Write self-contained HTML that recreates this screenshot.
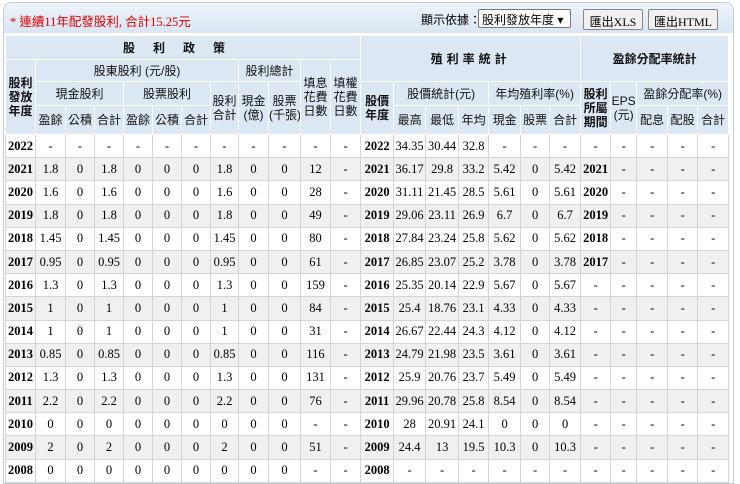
<!DOCTYPE html>
<html><head><meta charset="utf-8"><style>
body{margin:0;background:#fff;width:740px;height:466px;overflow:hidden;font-family:"Liberation Serif","Noto Sans CJK TC",serif;}
.box{position:absolute;left:3px;top:2px;width:729px;height:480px;border:1px solid #c4cdd6;border-radius:8px 8px 0 0;overflow:hidden;}
.top{position:absolute;left:0;top:0;width:729px;height:30px;background:linear-gradient(#eef4fa,#d9e6f2);}
.red{position:absolute;left:6px;top:8px;color:#e00000;font-size:12.5px;font-family:"Liberation Serif","Noto Sans CJK TC",serif;}
.lbl{position:absolute;left:417px;top:8px;font-size:12px;font-family:"Liberation Sans","Noto Sans CJK TC",sans-serif;}
.sel{position:absolute;left:474px;top:6px;width:93px;height:19px;border:1px solid #777;background:#fff;font-size:12px;font-family:"Liberation Sans","Noto Sans CJK TC",sans-serif;box-sizing:border-box;padding:1px 0 0 3px;border-radius:2px;white-space:nowrap;overflow:hidden}
.btn{position:absolute;top:6px;height:21px;border:1px solid #888;background:#f0f0f0;font-size:12px;box-sizing:border-box;padding:3px 0 0 0;text-align:center;border-radius:2px}
table{position:absolute;left:1px;top:32px;border-collapse:collapse;table-layout:fixed;width:724px;}
td,th{padding:0;text-align:center;font-size:12.5px;overflow:hidden;white-space:nowrap;}
th{background:#dbe8f4;border:1px solid #fff;font-weight:normal;font-family:"Liberation Sans","Noto Sans CJK TC",sans-serif;color:#111;line-height:14px;font-size:12px}
th.b{font-weight:bold}
td{border:1px solid #d4d4d4;height:22.2px;}
tr.g td{background:#f0f0f0}
td.y{font-weight:bold}
</style></head><body>
<div class="box">
<div class="top"></div>
<div class="red">* 連續11年配發股利, 合計15.25元</div>
<div class="lbl">顯示依據：</div>
<div class="sel">股利發放年度 ▾</div>
<div class="btn" style="left:579px;width:60px">匯出XLS</div>
<div class="btn" style="left:644px;width:70px">匯出HTML</div>
<table>
<colgroup>
<col style="width:30px"><col style="width:30px"><col style="width:29px"><col style="width:29px"><col style="width:29px"><col style="width:29px"><col style="width:29px"><col style="width:28px"><col style="width:30px"><col style="width:32px"><col style="width:30px"><col style="width:30px">
<col style="width:33px"><col style="width:32px"><col style="width:33px"><col style="width:30px"><col style="width:32px"><col style="width:29px"><col style="width:31px">
<col style="width:30px"><col style="width:26px"><col style="width:31px"><col style="width:30px"><col style="width:31px">
</colgroup>
<tr style="height:24px"><th class="b" colspan="12" style="letter-spacing:18px">股利政策</th><th class="b" colspan="7" rowspan="2" style="letter-spacing:4px">殖利率統計</th><th class="b" colspan="5" rowspan="2">盈餘分配率統計</th></tr>
<tr style="height:22px"><th class="b" rowspan="3">股利<br>發放<br>年度</th><th colspan="7">股東股利 (元/股)</th><th colspan="2">股利總計</th><th rowspan="3">填息<br>花費<br>日數</th><th rowspan="3">填權<br>花費<br>日數</th></tr>
<tr style="height:24px"><th colspan="3">現金股利</th><th colspan="3">股票股利</th><th rowspan="2">股利<br>合計</th><th rowspan="2">現金<br>(億)</th><th rowspan="2">股票<br>(千張)</th><th class="b" rowspan="2">股價<br>年度</th><th colspan="3">股價統計(元)</th><th colspan="3">年均殖利率(%)</th><th class="b" rowspan="2">股利<br>所屬<br>期間</th><th rowspan="2">EPS<br>(元)</th><th colspan="3">盈餘分配率(%)</th></tr>
<tr style="height:29px"><th>盈餘</th><th>公積</th><th>合計</th><th>盈餘</th><th>公積</th><th>合計</th><th>最高</th><th>最低</th><th>年均</th><th>現金</th><th>股票</th><th>合計</th><th>配息</th><th>配股</th><th>合計</th></tr>
<tr><td class="y">2022</td><td>-</td><td>-</td><td>-</td><td>-</td><td>-</td><td>-</td><td>-</td><td>-</td><td>-</td><td>-</td><td>-</td><td class="y">2022</td><td>34.35</td><td>30.44</td><td>32.8</td><td>-</td><td>-</td><td>-</td><td>-</td><td>-</td><td>-</td><td>-</td><td>-</td></tr>
<tr class="g"><td class="y">2021</td><td>1.8</td><td>0</td><td>1.8</td><td>0</td><td>0</td><td>0</td><td>1.8</td><td>0</td><td>0</td><td>12</td><td>-</td><td class="y">2021</td><td>36.17</td><td>29.8</td><td>33.2</td><td>5.42</td><td>0</td><td>5.42</td><td class="y">2021</td><td>-</td><td>-</td><td>-</td><td>-</td></tr>
<tr><td class="y">2020</td><td>1.6</td><td>0</td><td>1.6</td><td>0</td><td>0</td><td>0</td><td>1.6</td><td>0</td><td>0</td><td>28</td><td>-</td><td class="y">2020</td><td>31.11</td><td>21.45</td><td>28.5</td><td>5.61</td><td>0</td><td>5.61</td><td class="y">2020</td><td>-</td><td>-</td><td>-</td><td>-</td></tr>
<tr class="g"><td class="y">2019</td><td>1.8</td><td>0</td><td>1.8</td><td>0</td><td>0</td><td>0</td><td>1.8</td><td>0</td><td>0</td><td>49</td><td>-</td><td class="y">2019</td><td>29.06</td><td>23.11</td><td>26.9</td><td>6.7</td><td>0</td><td>6.7</td><td class="y">2019</td><td>-</td><td>-</td><td>-</td><td>-</td></tr>
<tr><td class="y">2018</td><td>1.45</td><td>0</td><td>1.45</td><td>0</td><td>0</td><td>0</td><td>1.45</td><td>0</td><td>0</td><td>80</td><td>-</td><td class="y">2018</td><td>27.84</td><td>23.24</td><td>25.8</td><td>5.62</td><td>0</td><td>5.62</td><td class="y">2018</td><td>-</td><td>-</td><td>-</td><td>-</td></tr>
<tr class="g"><td class="y">2017</td><td>0.95</td><td>0</td><td>0.95</td><td>0</td><td>0</td><td>0</td><td>0.95</td><td>0</td><td>0</td><td>61</td><td>-</td><td class="y">2017</td><td>26.85</td><td>23.07</td><td>25.2</td><td>3.78</td><td>0</td><td>3.78</td><td class="y">2017</td><td>-</td><td>-</td><td>-</td><td>-</td></tr>
<tr><td class="y">2016</td><td>1.3</td><td>0</td><td>1.3</td><td>0</td><td>0</td><td>0</td><td>1.3</td><td>0</td><td>0</td><td>159</td><td>-</td><td class="y">2016</td><td>25.35</td><td>20.14</td><td>22.9</td><td>5.67</td><td>0</td><td>5.67</td><td>-</td><td>-</td><td>-</td><td>-</td><td>-</td></tr>
<tr class="g"><td class="y">2015</td><td>1</td><td>0</td><td>1</td><td>0</td><td>0</td><td>0</td><td>1</td><td>0</td><td>0</td><td>84</td><td>-</td><td class="y">2015</td><td>25.4</td><td>18.76</td><td>23.1</td><td>4.33</td><td>0</td><td>4.33</td><td>-</td><td>-</td><td>-</td><td>-</td><td>-</td></tr>
<tr><td class="y">2014</td><td>1</td><td>0</td><td>1</td><td>0</td><td>0</td><td>0</td><td>1</td><td>0</td><td>0</td><td>31</td><td>-</td><td class="y">2014</td><td>26.67</td><td>22.44</td><td>24.3</td><td>4.12</td><td>0</td><td>4.12</td><td>-</td><td>-</td><td>-</td><td>-</td><td>-</td></tr>
<tr class="g"><td class="y">2013</td><td>0.85</td><td>0</td><td>0.85</td><td>0</td><td>0</td><td>0</td><td>0.85</td><td>0</td><td>0</td><td>116</td><td>-</td><td class="y">2013</td><td>24.79</td><td>21.98</td><td>23.5</td><td>3.61</td><td>0</td><td>3.61</td><td>-</td><td>-</td><td>-</td><td>-</td><td>-</td></tr>
<tr><td class="y">2012</td><td>1.3</td><td>0</td><td>1.3</td><td>0</td><td>0</td><td>0</td><td>1.3</td><td>0</td><td>0</td><td>131</td><td>-</td><td class="y">2012</td><td>25.9</td><td>20.76</td><td>23.7</td><td>5.49</td><td>0</td><td>5.49</td><td>-</td><td>-</td><td>-</td><td>-</td><td>-</td></tr>
<tr class="g"><td class="y">2011</td><td>2.2</td><td>0</td><td>2.2</td><td>0</td><td>0</td><td>0</td><td>2.2</td><td>0</td><td>0</td><td>76</td><td>-</td><td class="y">2011</td><td>29.96</td><td>20.78</td><td>25.8</td><td>8.54</td><td>0</td><td>8.54</td><td>-</td><td>-</td><td>-</td><td>-</td><td>-</td></tr>
<tr><td class="y">2010</td><td>0</td><td>0</td><td>0</td><td>0</td><td>0</td><td>0</td><td>0</td><td>0</td><td>0</td><td>-</td><td>-</td><td class="y">2010</td><td>28</td><td>20.91</td><td>24.1</td><td>0</td><td>0</td><td>0</td><td>-</td><td>-</td><td>-</td><td>-</td><td>-</td></tr>
<tr class="g"><td class="y">2009</td><td>2</td><td>0</td><td>2</td><td>0</td><td>0</td><td>0</td><td>2</td><td>0</td><td>0</td><td>51</td><td>-</td><td class="y">2009</td><td>24.4</td><td>13</td><td>19.5</td><td>10.3</td><td>0</td><td>10.3</td><td>-</td><td>-</td><td>-</td><td>-</td><td>-</td></tr>
<tr><td class="y">2008</td><td>0</td><td>0</td><td>0</td><td>0</td><td>0</td><td>0</td><td>0</td><td>0</td><td>0</td><td>-</td><td>-</td><td class="y">2008</td><td>-</td><td>-</td><td>-</td><td>-</td><td>-</td><td>-</td><td>-</td><td>-</td><td>-</td><td>-</td><td>-</td></tr>
</table>
</div>
</body></html>
